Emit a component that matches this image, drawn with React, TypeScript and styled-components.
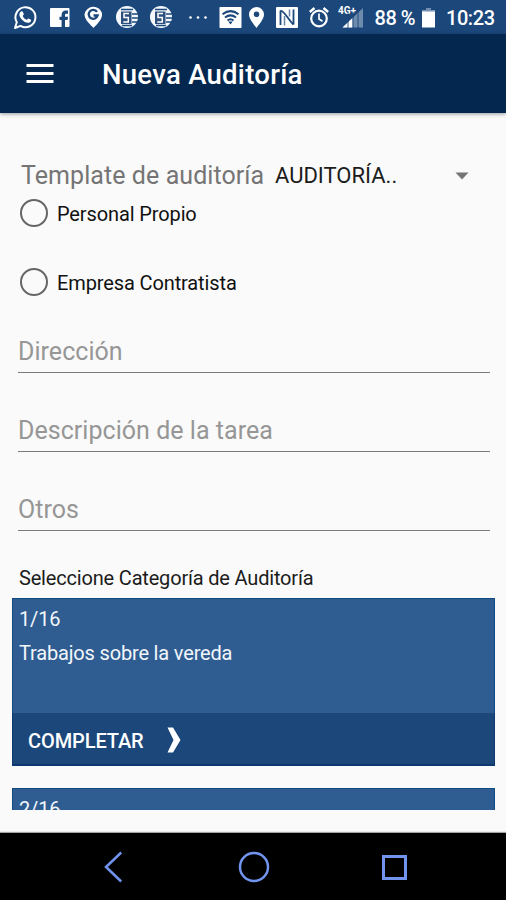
import React from 'react';
import styled, { createGlobalStyle } from 'styled-components';

const GlobalStyle = createGlobalStyle`
  * { box-sizing: border-box; }
  body { margin: 0; background: #fafafa; font-family: Roboto, "Noto Sans", sans-serif; }
  button { font: inherit; border: 0; padding: 0; background: none; display: block; }
`;

const Screen = styled.div`
  width: 506px;
  height: 900px;
  display: flex;
  flex-direction: column;
  overflow: hidden;
  background: #fafafa;
`;

const StatusBar = styled.div`
  height: 34px;
  flex: none;
  background: #1b477b;
  color: #fff;
`;

const StatusIcons = styled.svg`
  display: block;
`;

const AppBar = styled.header`
  height: 79px;
  flex: none;
  display: flex;
  align-items: center;
  padding: 1px 0 0 26px;
  background: #03274f;
  box-shadow: 0 1px 4px rgba(0, 0, 0, 0.4);
  color: #fff;
`;

const MenuButton = styled.button`
  width: 28px;
  height: 20px;
  margin-right: 48px;
`;

const Title = styled.h1`
  margin: 0;
  padding-top: 2px;
  font-size: 27.5px;
  font-weight: 500;
  line-height: 36px;
  letter-spacing: 0.28px;
`;

const Content = styled.main`
  height: 697px;
  flex: none;
  padding: 46px 11px 0 12px;
  overflow: hidden;
`;

const TemplateRow = styled.div`
  height: 32px;
  display: flex;
  align-items: center;
  padding: 0 26px 0 9px;
`;

const TemplateLabel = styled.span`
  width: 254px;
  white-space: nowrap;
  font-size: 25px;
  letter-spacing: 0.07px;
  color: #757575;
`;

const TemplateSelect = styled.button`
  flex: 1;
  display: flex;
  align-items: center;
  justify-content: space-between;
  font-size: 22px;
  line-height: 30px;
  padding-top: 1px;
  color: #1c1c1c;
`;

const RadioRow = styled.label<{ $gap: number }>`
  height: 30px;
  display: flex;
  align-items: center;
  gap: 9px;
  padding-left: 8px;
  margin-bottom: ${(p) => p.$gap}px;
  font-size: 20px;
  letter-spacing: -0.12px;
  color: #111;
`;

const RadioCircle = styled.span`
  width: 28px;
  height: 28px;
  border: 2.5px solid #666;
  border-radius: 50%;
`;

const RadioText = styled.span`
  padding-top: 1px;
`;

const Radios = styled.div`
  padding-top: 7px;
  height: 139px;
`;

const Field = styled.div`
  height: 43px;
  margin: 0 5px 36px 6px;
  border-bottom: 1px solid #7b7b7b;
  font-size: 25px;
  line-height: 44px;
  letter-spacing: 0.04px;
  color: #969696;
`;

const Caption = styled.div`
  height: 30px;
  margin-top: -4px;
  padding-left: 7px;
  font-size: 20px;
  line-height: 30px;
  letter-spacing: -0.18px;
  color: #1c1c1c;
`;

const CardList = styled.div`
  margin-top: 5px;
  height: 212px;
  overflow: hidden;
`;

const Card = styled.section`
  height: 168px;
  margin-bottom: 22px;
  display: flex;
  flex-direction: column;
  background: #2f5d91;
  box-shadow: inset 0 0 0 1px #124b83;
  color: #f2f6fb;
  font-size: 20px;
`;

const CardText = styled.div`
  flex: 1;
  padding: 4px 7px 0;
  line-height: 34px;
  letter-spacing: -0.17px;
`;

const CardAction = styled.button`
  height: 53px;
  width: 100%;
  display: flex;
  align-items: center;
  gap: 23px;
  padding: 0 0 0 16px;
  background: #1b477b;
  box-shadow: inset 0 -1px 0 1px #0d3970;
  color: #fff;
  font-weight: 500;
`;

const ActionLabel = styled.span`
  padding-top: 3px;
  letter-spacing: -0.1px;
`;

const NavBar = styled.nav`
  height: 67px;
  margin-top: 23px;
  flex: none;
  display: flex;
  align-items: center;
  padding-left: 98px;
  gap: 110px;
  background: #000;
  box-shadow: 0 -1px 1px rgba(0, 0, 0, 0.35);
`;

const NavButton = styled.button`
  width: 30px;
  height: 32px;
`;

function CircleDocument({ x }: { x: number }) {
  return (
    <g transform={`translate(${x} 0)`}>
      <circle cx="11" cy="17" r="11" fill="#f4f8fc" />
      <path d="M5 9.5H17M16 14H23M16 18H23M16 22H23M6 25.5H16" stroke="#1b477b" strokeWidth="1.3" />
      <rect x="5" y="11.5" width="10.5" height="12.5" fill="#2c4f7d" />
      <path d="M13 13.500H8V17.500H12.300V22H7.300" fill="none" stroke="#fff" strokeWidth="1.500" />
    </g>
  );
}

function Status() {
  return (
    <StatusBar>
      <StatusIcons width="506" height="34" viewBox="0 0 506 34" fontFamily="Roboto, sans-serif" fill="#fff">
        <g>
          <path d="M15 28L16.8 22.2A10 10 0 1 1 20.5 25.9Z" fill="none" stroke="#fff" strokeWidth="2" strokeLinejoin="round" />
          <path d="M20.5 11.8C21.2 11 22.4 11 22.8 11.8L23.8 14C24 14.7 22.8 15.5 22.7 15.9C23.5 17.8 25 19.1 26.8 19.8C27.4 19.5 28 18.4 28.6 18.5L31 19.8C31.4 20.3 31 22.1 29.2 22.7C25 24 18.3 17.4 19.5 13.5Z" />
        </g>
        <g>
          <rect x="50" y="8" width="19.500" height="19" rx="1" />
          <path d="M61.6 27V20H59.5V16.8H61.6V15C61.6 12 63.3 10.5 65.8 10.5H68V13.7H66.5C65.2 13.7 65 14.2 65 15.2V16.8H68L67.6 20H65V27Z" fill="#1b477b" />
        </g>
        <g>
          <path d="M93.500 28C91 25 84.500 20 84.500 14.500A9 9 0 0 1 102 13V15C102 20 96 25 93.500 28Z" />
          <path d="M97 11.800A4.500 4.500 0 1 0 97.600 15.500H93.500" fill="none" stroke="#1b477b" strokeWidth="2.300" />
        </g>
        <CircleDocument x={116} />
        <CircleDocument x={150} />
        <circle cx="190.500" cy="17.500" r="1.300" />
        <circle cx="198" cy="17.500" r="1.300" />
        <circle cx="205.500" cy="17.500" r="1.300" />
        <g>
          <rect x="219.500" y="7" width="22" height="21" rx="0.800" />
          <path d="M222.500 14.300Q230.500 8 238.500 14.300M225 17.500Q230.500 13.300 236 17.500M227.500 20.500Q230.500 18 233.500 20.500" fill="none" stroke="#1b477b" strokeWidth="2" />
          <path d="M228.300 21.500H232.700L230.500 24.500Z" fill="#1b477b" />
        </g>
        <path fillRule="evenodd" d="M256.500 28C254 24.500 249 19 249 14.500A7.500 7.500 0 0 1 264 14.500C264 19 259 24.500 256.500 28ZM256.500 11.500A2.800 2.800 0 1 0 256.500 17.100A2.800 2.800 0 1 0 256.500 11.500Z" />
        <g>
          <rect x="276" y="7" width="22" height="21" rx="1" />
          <path d="M280.500 25V10.500M293.500 9.500V24.500" stroke="#1b477b" strokeWidth="1.800" />
          <path d="M280.500 10.500C285.500 12 287.500 19 293.500 24.500" fill="none" stroke="#1b477b" strokeWidth="1.800" />
          <path d="M284.500 16V25.500M289.500 9.500V16.500" stroke="#6783a5" strokeWidth="1.500" />
        </g>
        <g fill="none" stroke="#fff">
          <circle cx="319" cy="18.500" r="7.800" strokeWidth="2.200" />
          <path d="M309.800 12L314.500 8M328.200 12L323.500 8" strokeWidth="2.300" />
          <path d="M319 13.500V19L322.500 21.200" strokeWidth="1.700" />
        </g>
        <text x="338" y="14" fontSize="10" fontWeight="700" textLength="18" lengthAdjust="spacingAndGlyphs">4G+</text>
        <path d="M342.500 27.500L363 8V27.500Z" fill="#6d8bad" />
        <path d="M342.500 27.500L352.500 18V27.500Z" />
        <path d="M348 12V28M353 12V28M358 8V28" stroke="#1b477b" strokeWidth="0.900" />
        <text x="374.500" y="25" fontSize="20" fontWeight="500" textLength="41">88 %</text>
        <path d="M422 10.500H426V8H431V10.500H435V27.500H422Z" />
        <path d="M426 8H431V10.500H435V11.500H422V10.500H426Z" fill="#728faf" />
        <text x="446" y="25" fontSize="20" fontWeight="500" textLength="49">10:23</text>
      </StatusIcons>
    </StatusBar>
  );
}

const fields = ['Dirección', 'Descripción de la tarea', 'Otros'];

const categories = [
  { index: '1/16', name: 'Trabajos sobre la vereda', action: 'COMPLETAR' },
  { index: '2/16' },
];

export default function App() {
  return (
    <>
      <GlobalStyle />
      <Screen>
        <Status />
        <AppBar>
          <MenuButton aria-label="Menú">
            <svg width="28" height="20" viewBox="0 0 28 20" display="block">
              <path d="M0.500 1.500H27.500M0.500 9.500H27.500M0.500 17.500H27.500" stroke="#fff" strokeWidth="3" />
            </svg>
          </MenuButton>
          <Title>Nueva Auditoría</Title>
        </AppBar>
        <Content>
          <TemplateRow>
            <TemplateLabel>Template de auditoría</TemplateLabel>
            <TemplateSelect>
              AUDITORÍA..
              <svg width="14" height="8" viewBox="0 0 14 8">
                <path d="M0.500 0.500H13.500L7 7.500Z" fill="#757575" />
              </svg>
            </TemplateSelect>
          </TemplateRow>
          <Radios>
            <RadioRow $gap={39}>
              <RadioCircle />
              <RadioText>Personal Propio</RadioText>
            </RadioRow>
            <RadioRow $gap={0}>
              <RadioCircle />
              <RadioText>Empresa Contratista</RadioText>
            </RadioRow>
          </Radios>
          {fields.map((label) => (
            <Field key={label}>{label}</Field>
          ))}
          <Caption>Seleccione Categoría de Auditoría</Caption>
          <CardList>
            {categories.map((category) => (
              <Card key={category.index}>
                <CardText>
                  <div>{category.index}</div>
                  {category.name && <div>{category.name}</div>}
                </CardText>
                {category.action && (
                  <CardAction>
                    <ActionLabel>{category.action}</ActionLabel>
                    <svg width="14" height="26" viewBox="0 0 14 26">
                      <path d="M0.500 0.500H6L13.500 13L6 25.500H0.500L6.500 13Z" fill="#fff" />
                    </svg>
                  </CardAction>
                )}
              </Card>
            ))}
          </CardList>
        </Content>
        <NavBar>
          <NavButton aria-label="Atrás">
            <svg width="30" height="32" viewBox="0 0 30 32" fill="none" stroke="#7195ee" strokeWidth="2.500">
              <path d="M23.200 1.500L8 16L23.200 30.500" />
            </svg>
          </NavButton>
          <NavButton aria-label="Inicio">
            <svg width="32" height="32" viewBox="0 0 32 32" fill="none" stroke="#7195ee" strokeWidth="2.500">
              <circle cx="16" cy="16" r="14" />
            </svg>
          </NavButton>
          <NavButton aria-label="Recientes">
            <svg width="30" height="32" viewBox="0 0 30 32" fill="none" stroke="#7195ee" strokeWidth="3">
              <rect x="5.500" y="5.500" width="22" height="22" />
            </svg>
          </NavButton>
        </NavBar>
      </Screen>
    </>
  );
}
